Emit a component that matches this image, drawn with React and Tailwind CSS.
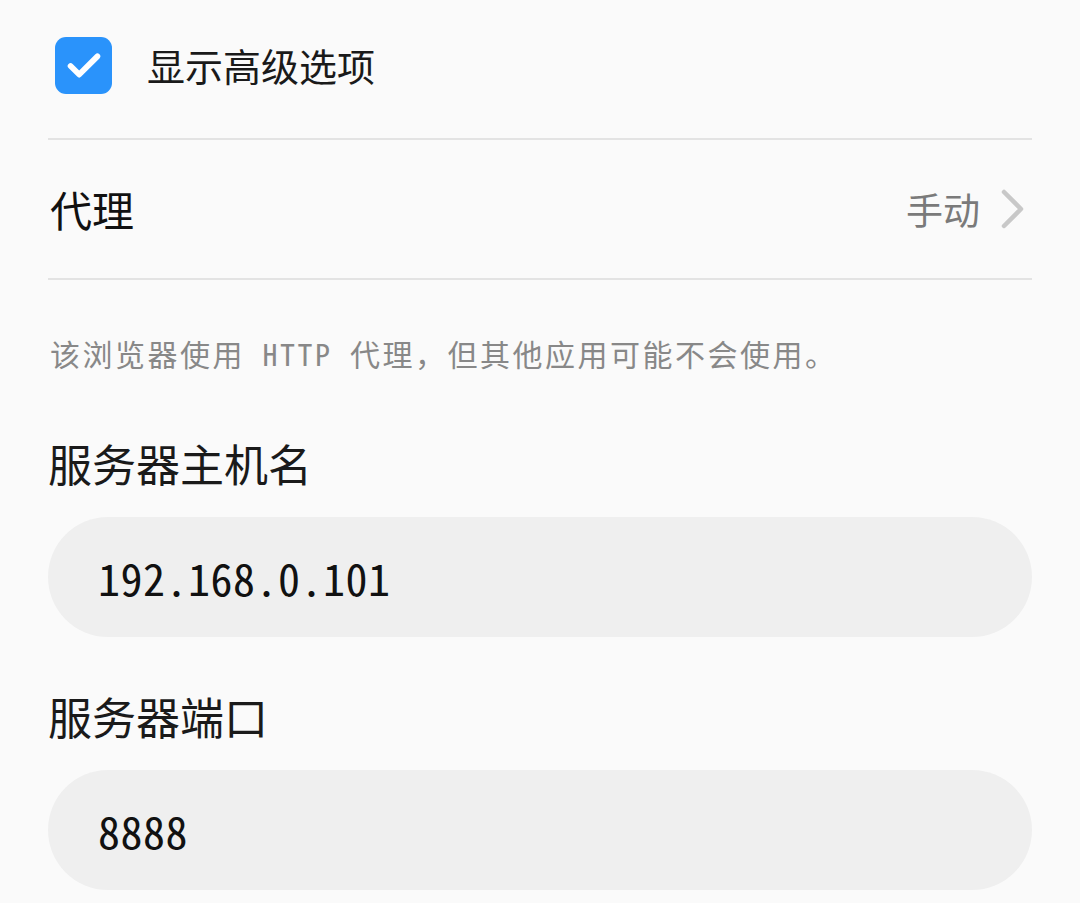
const font = { fontFamily: '"Noto Sans Mono CJK SC", "Noto Sans CJK SC", "DejaVu Sans Mono", monospace' }

function Check() {
    return (
        <div className="flex h-[57px] w-[57px] items-center justify-center rounded-[11px] bg-[#2a93fb]">
            <svg width="46" height="46" viewBox="0 0 24 24" fill="none" stroke="white" strokeWidth="3" strokeLinecap="round" strokeLinejoin="round">
                <path d="M5 12.5l4.5 4.5L19 7.5" />
            </svg>
        </div>
    )
}

function Field({ label, value }) {
    return (
        <div>
            <div className="flex h-[108px] items-center text-[44px] leading-none text-[#1a1a1a]">{label}</div>
            <div className="flex h-[120px] items-center rounded-full bg-[#efefef] px-[50px] text-[44px] leading-none tracking-[0.5px] text-[#111]">
                {value}
            </div>
        </div>
    )
}

export default function App() {
    return (
        <div className="min-h-[903px] w-[1080px] bg-[#fafafa] px-[48px]" style={font}>
            {/* Advanced options toggle */}
            <div className="flex h-[138px] items-center gap-[35px] pb-[8px] pl-[7px]">
                <Check />
                <span className="text-[38px] leading-none text-[#1a1a1a]">显示高级选项</span>
            </div>
            <div className="h-[2px] bg-[#e3e3e3]" />

            {/* Proxy row */}
            <div className="flex h-[138px] items-center justify-between">
                <span className="pl-[2px] text-[42px] leading-none text-[#111]">代理</span>
                <div className="flex items-center gap-[20px] pr-[6px]">
                    <span className="text-[37px] leading-none text-[#7a7a7a]">手动</span>
                    <svg width="26" height="40" viewBox="0 0 26 40" fill="none" stroke="#c8c8c8" strokeWidth="4.5" strokeLinecap="round" strokeLinejoin="round">
                        <path d="M4 3l17 17L4 37" />
                    </svg>
                </div>
            </div>
            <div className="h-[2px] bg-[#e3e3e3]" />

            <p className="flex h-[150px] items-center pb-[4px] pl-[2px] text-[30px] leading-none tracking-[2.5px] text-[#888]">
                该浏览器使用 HTTP 代理，但其他应用可能不会使用。
            </p>

            <div className="-mt-[21px] flex flex-col gap-[25px]">
                <Field label="服务器主机名" value="192.168.0.101" />
                <Field label="服务器端口" value="8888" />
            </div>
        </div>
    )
}
